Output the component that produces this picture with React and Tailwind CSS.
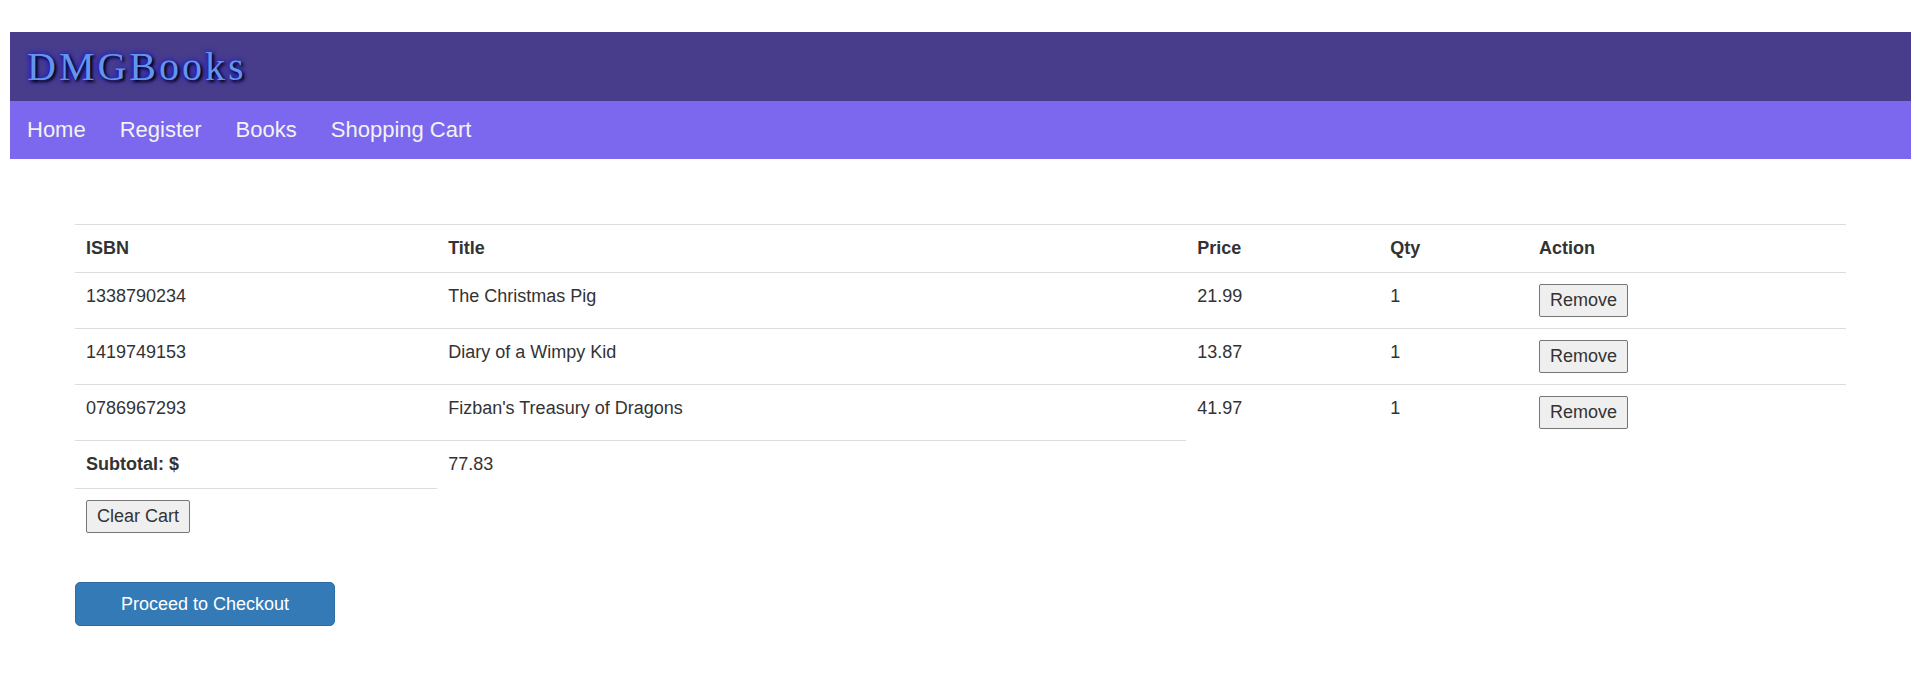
const navLinks = ["Home", "Register", "Books", "Shopping Cart"];

const items = [
  { isbn: "1338790234", title: "The Christmas Pig", price: "21.99", qty: 1 },
  { isbn: "1419749153", title: "Diary of a Wimpy Kid", price: "13.87", qty: 1 },
  { isbn: "0786967293", title: "Fizban's Treasury of Dragons", price: "41.97", qty: 1 },
];

function Cell({ as: Tag = "td", className = "", children, ...rest }) {
  return (
    <Tag className={`border-t border-[#ddd] p-[11px] text-left align-top ${className}`} {...rest}>
      {children}
    </Tag>
  );
}

function PlainButton({ children, ...rest }) {
  return (
    <button
      type="button"
      className="block rounded-[2px] border border-[#767676] bg-[#efefef] px-[10px] py-[3px] leading-[25px]"
      {...rest}
    >
      {children}
    </button>
  );
}

export default function App() {
  return (
    <div className="bg-white pr-[9px] pl-[10px] pt-8 pb-10 font-['Liberation_Sans',Arial,sans-serif] text-[18px] leading-[25px] text-[#333]">
      <header className="bg-[#483d8b] px-[17px] py-[12px]">
        <h1 className="font-['Liberation_Serif','Times_New_Roman',serif] text-[40px] leading-[45px] tracking-[3px] text-[#6495ed] [text-shadow:2px_2px_3px_black,0_0_6px_blue]">
          DMGBooks
        </h1>
      </header>
      <nav className="flex gap-[34px] bg-[#7b68ee] px-[17px] py-4 text-[22px] leading-[26px] text-[#f2f2f2]">
        {navLinks.map((label) => (
          <a key={label} href="#">
            {label}
          </a>
        ))}
      </nav>

      <main className="px-[65px] pt-[65px]">
        <table className="w-full table-fixed border-separate border-spacing-0">
          <colgroup>
            <col className="w-[20.45%]" />
            <col className="w-[42.3%]" />
            <col className="w-[10.9%]" />
            <col className="w-[8.4%]" />
            <col />
          </colgroup>
          <thead>
            <tr>
              {["ISBN", "Title", "Price", "Qty", "Action"].map((heading) => (
                <Cell as="th" scope="col" className="font-bold" key={heading}>
                  {heading}
                </Cell>
              ))}
            </tr>
          </thead>
          <tbody>
            {items.map((item) => (
              <tr key={item.isbn}>
                <Cell>{item.isbn}</Cell>
                <Cell>{item.title}</Cell>
                <Cell>{item.price}</Cell>
                <Cell>{item.qty}</Cell>
                <Cell>
                  <PlainButton aria-label={`Remove ${item.title}`}>Remove</PlainButton>
                </Cell>
              </tr>
            ))}
            <tr>
              <Cell as="th" scope="row" className="font-bold">
                Subtotal: $
              </Cell>
              <Cell>77.83</Cell>
            </tr>
            <tr>
              <Cell>
                <PlainButton>Clear Cart</PlainButton>
              </Cell>
            </tr>
          </tbody>
        </table>

        <button
          type="button"
          className="mt-[38px] h-11 w-[260px] rounded-[5px] border border-[#2e6da4] bg-[#337ab7] text-center text-white"
        >
          Proceed to Checkout
        </button>
      </main>
    </div>
  );
}
